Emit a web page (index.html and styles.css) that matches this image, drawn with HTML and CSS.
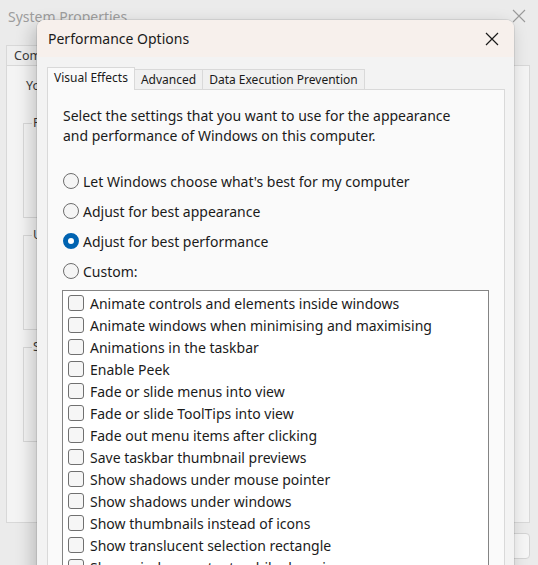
FILE: index.html
```html
<!DOCTYPE html>
<html lang="en">
<head>
<meta charset="utf-8">
<title>Performance Options</title>
<link rel="stylesheet" href="styles.css">
</head>
<body>
<div class="desk">
  <div class="sys">
    <div class="sys-title">
      <span class="sys-title-text">System Properties</span>
      <svg class="sys-close" width="14" height="14" viewBox="0 0 14 14"><path d="M1 1L13 13M13 1L1 13" stroke="#9a9a9a" stroke-width="1.1" fill="none"/></svg>
    </div>
    <div class="sys-tabs">
      <div class="sys-tab">Computer Name</div>
      <div class="sys-tab">Hardware</div>
      <div class="sys-tab sys-tab-on">Advanced</div>
    </div>
    <div class="sys-panel">
      <p class="sys-note">You must be logged on as an Administrator to make most of these changes.</p>
      <fieldset class="grp"><legend>Performance</legend></fieldset>
      <fieldset class="grp"><legend>User Profiles</legend></fieldset>
      <fieldset class="grp"><legend>Startup and Recovery</legend></fieldset>
    </div>
    <div class="sys-buttons">
      <div class="sys-btn">OK</div>
      <div class="sys-btn">Cancel</div>
      <div class="sys-btn">Apply</div>
    </div>
  </div>

  <div class="perf">
    <div class="perf-title">
      <span class="perf-title-text">Performance Options</span>
      <svg class="perf-close" width="14" height="14" viewBox="0 0 14 14"><path d="M1 1L13 13M13 1L1 13" stroke="#1a1a1a" stroke-width="1.2" fill="none"/></svg>
    </div>
    <div class="perf-body">
      <div class="tabs">
        <div class="tab tab-on">Visual Effects</div>
        <div class="tab">Advanced</div>
        <div class="tab">Data Execution Prevention</div>
      </div>
      <div class="panel">
        <p class="intro">Select the settings that you want to use for the appearance and performance of Windows on this computer.</p>
        <div class="radios">
          <div class="radio-row"><span class="radio"></span><span>Let Windows choose what's best for my computer</span></div>
          <div class="radio-row"><span class="radio"></span><span>Adjust for best appearance</span></div>
          <div class="radio-row"><span class="radio radio-on"></span><span>Adjust for best performance</span></div>
          <div class="radio-row"><span class="radio"></span><span>Custom:</span></div>
        </div>
        <div class="list">
          <div class="item"><span class="check"></span><span>Animate controls and elements inside windows</span></div>
          <div class="item"><span class="check"></span><span>Animate windows when minimising and maximising</span></div>
          <div class="item"><span class="check"></span><span>Animations in the taskbar</span></div>
          <div class="item"><span class="check"></span><span>Enable Peek</span></div>
          <div class="item"><span class="check"></span><span>Fade or slide menus into view</span></div>
          <div class="item"><span class="check"></span><span>Fade or slide ToolTips into view</span></div>
          <div class="item"><span class="check"></span><span>Fade out menu items after clicking</span></div>
          <div class="item"><span class="check"></span><span>Save taskbar thumbnail previews</span></div>
          <div class="item"><span class="check"></span><span>Show shadows under mouse pointer</span></div>
          <div class="item"><span class="check"></span><span>Show shadows under windows</span></div>
          <div class="item"><span class="check"></span><span>Show thumbnails instead of icons</span></div>
          <div class="item"><span class="check"></span><span>Show translucent selection rectangle</span></div>
          <div class="item"><span class="check"></span><span>Show window contents while dragging</span></div>
          <div class="item"><span class="check"></span><span>Smooth edges of screen fonts</span></div>
          <div class="item"><span class="check"></span><span>Smooth-scroll list boxes</span></div>
        </div>
      </div>
    </div>
  </div>
</div>
</body>
</html>
```
FILE: styles.css
```css
* { box-sizing: border-box; }
html, body { margin: 0; padding: 0; }
body {
  width: 538px;
  height: 565px;
  overflow: hidden;
  font-family: "Noto Sans", "Open Sans", sans-serif;
  color: #1b1b1b;
  background: #e9e9e9;
}
.desk {
  position: relative;
  width: 538px;
  height: 565px;
  overflow: hidden;
}

/* Background window: System Properties */
.sys {
  width: 538px;
  height: 565px;
  background: #ebebeb;
  color: #8e8e8e;
}
.sys-title {
  height: 32px;
  display: flex;
  align-items: center;
  justify-content: space-between;
  padding: 0 12px 0 8px;
  font-size: 14px;
}
.sys-title-text { color: #9d9d9d; }
.sys-close { display: block; margin-top: -1px; }
.sys-tabs {
  display: flex;
  margin-top: 13px;
  padding-left: 6px;
  height: 20px;
}
.sys-tab {
  font-size: 12.5px;
  line-height: 19px;
  padding: 0 7px;
  border: 1px solid #d8d8d8;
  border-bottom: none;
  background: #efefef;
  color: #3a3a3a;
}
.sys-panel {
  margin: 0 8px 0 6px;
  height: 458px;
  border: 1px solid #d8d8d8;
  background: #f4f4f4;
  padding: 12px 16px 0 16px;
}
.sys-note {
  margin: 0 0 21px 2px;
  font-size: 12.5px;
  line-height: 16px;
  color: #3a3a3a;
  padding-left: 1px;
}
.grp {
  margin: 0 0 9px 0;
  height: 103px;
  border: 1px solid #d8d8d8;
  padding: 0 8px;
}
.grp legend {
  font-size: 12.5px;
  line-height: 16px;
  padding: 0 1px;
  color: #3a3a3a;
}
.sys-buttons {
  display: flex;
  justify-content: flex-end;
  gap: 8px;
  padding: 10px 8px 0 0;
}
.sys-btn {
  width: 74px;
  height: 26px;
  border: 1px solid #d4d4d4;
  border-radius: 4px;
  background: #f6f6f6;
  font-size: 12.5px;
  text-align: center;
  line-height: 24px;
  color: #3a3a3a;
}

/* Foreground window: Performance Options */
.perf {
  position: absolute;
  left: 37px;
  top: 20px;
  width: 477px;
  height: 580px;
  background: #f3f3f3;
  border-radius: 8px 8px 0 0;
  box-shadow: 0 0 0 1px rgba(0,0,0,0.08), -4px 6px 18px rgba(0,0,0,0.22);
  overflow: hidden;
}
.perf-title {
  height: 37px;
  background: #f7f0ec;
  display: flex;
  align-items: center;
  justify-content: space-between;
  padding: 0 15px 0 11px;
}
.perf-title-text {
  font-size: 14px;
  color: #1a1a1a;
}
.perf-close { display: block; }
.perf-body {
  padding: 9px 9px 0 10px;
}
.tabs {
  display: flex;
  align-items: flex-end;
  height: 23px;
}
.tab {
  height: 20px;
  padding: 0 6px;
  font-size: 12px;
  line-height: 19px;
  background: #f0f0f0;
  border: 1px solid #d9d9d9;
  border-bottom: none;
  border-left: none;
  color: #1a1a1a;
}
.tab-on {
  height: 23px;
  margin-bottom: -1px;
  background: #fafafa;
  border-left: 1px solid #d9d9d9;
  line-height: 20px;
  position: relative;
  z-index: 1;
}
.panel {
  background: #fafafa;
  border: 1px solid #d9d9d9;
  padding: 16px 15px 0 15px;
  height: 520px;
}
.intro {
  margin: 0;
  max-width: 405px;
  font-size: 14px;
  line-height: 20px;
}
.radios {
  margin-top: 25px;
  display: flex;
  flex-direction: column;
  gap: 10px;
}
.radio-row {
  display: flex;
  align-items: center;
  height: 20px;
  font-size: 14px;
  gap: 4px;
}
.radio {
  width: 16px;
  height: 16px;
  border-radius: 50%;
  border: 1px solid #6d6d6d;
  background: #f5f5f5;
  flex: none;
}
.radio-on {
  border: 5px solid #0063b1;
  background: #ffffff;
}
.list {
  margin: 9px 0 0 -1px;
  border: 1px solid #848484;
  background: #ffffff;
  padding: 1px 0 0 5px;
}
.item {
  display: flex;
  align-items: center;
  height: 22px;
  font-size: 14px;
  gap: 6px;
}
.check {
  width: 16px;
  height: 16px;
  border: 1px solid #707070;
  border-radius: 3px;
  background: #f6f6f6;
  flex: none;
}
```
